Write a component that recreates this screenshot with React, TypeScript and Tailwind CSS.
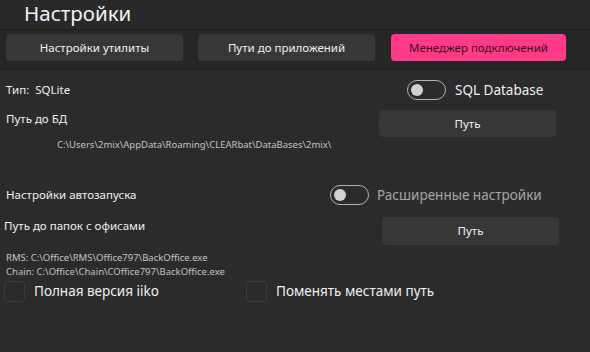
import React from "react";

const font = { fontFamily: '"Noto Sans", "Open Sans", sans-serif' };

function Toggle() {
  return (
    <div className="w-[39px] h-[20px] rounded-full border-[1.5px] border-[#b4b4b4] flex items-center pl-[3px] shrink-0">
      <div className="w-[12px] h-[12px] rounded-full bg-[#d2d2d2]" />
    </div>
  );
}

function Checkbox() {
  return <div className="w-[21px] h-[21px] rounded-[4px] border border-[#3c3c3c] bg-[#2a2a2a] shrink-0" />;
}

export default function App() {
  return (
    <div className="w-[590px] h-[352px] bg-[#2b2b2b] overflow-hidden text-white" style={font}>
      <div className="h-[30px] bg-[#292929] border-b border-[#1f1f1f] pl-[24px]">
        <div className="text-[20.5px] leading-[26px] text-[#f2f2f2]">Настройки</div>
      </div>
      <div className="h-[40px] bg-[#262626] border-b border-[#1f1f1f] flex items-start pt-[4px] pl-[6px]">
        <div className="w-[177px] h-[27px] rounded-[4px] bg-[#373737] flex items-center justify-center text-[11.5px] text-[#f0f0f0]">Настройки утилиты</div>
        <div className="w-[177px] h-[27px] ml-[15px] rounded-[4px] bg-[#373737] flex items-center justify-center text-[11.5px] text-[#f0f0f0]">Пути до приложений</div>
        <div className="w-[175px] h-[27px] ml-[16px] rounded-[4px] bg-[#ff3a86] flex items-center justify-center text-[11.5px] text-[#3a0d1e]">Менеджер подключений</div>
      </div>
      <div className="pt-[10px]">
        <div className="h-[20px] flex items-center">
          <div className="pl-[6px] text-[11.5px] text-[#f0f0f0] w-[407px]">Тип:&nbsp; SQLite</div>
          <Toggle />
          <div className="ml-[9px] text-[13.5px] text-[#f0f0f0]">SQL Database</div>
        </div>
        <div className="mt-[10px] h-[27px] flex items-start">
          <div className="pl-[6px] text-[11.5px] text-[#f0f0f0] w-[379px] leading-[18px]">Путь до БД</div>
          <div className="w-[177px] h-[27px] rounded-[4px] bg-[#373737] flex items-center justify-center text-[11.5px] text-[#f0f0f0]">Путь</div>
        </div>
        <div className="pl-[57px] mt-[2px] text-[9.5px] leading-[12px] text-[#c4c4c4]">C:\Users\2mix\AppData\Roaming\CLEARbat\DataBases\2mix\</div>
        <div className="mt-[34px] h-[20px] flex items-center">
          <div className="pl-[6px] text-[11.5px] text-[#f0f0f0] w-[330px]">Настройки автозапуска</div>
          <Toggle />
          <div className="ml-[8px] text-[13.5px] text-[#a6a6a6]">Расширенные настройки</div>
        </div>
        <div className="mt-[12px] h-[28px] flex items-start">
          <div className="pl-[4px] text-[11.5px] text-[#f0f0f0] w-[382px] leading-[18px]">Путь до папок с офисами</div>
          <div className="w-[177px] h-[28px] rounded-[4px] bg-[#373737] flex items-center justify-center text-[11.5px] text-[#f0f0f0]">Путь</div>
        </div>
        <div className="pl-[6px] mt-[6px] text-[9.5px] leading-[14px] text-[#c4c4c4]">
          <div>RMS: C:\Office\RMS\Office797\BackOffice.exe</div>
          <div>Chain: C:\Office\Chain\COffice797\BackOffice.exe</div>
        </div>
        <div className="mt-[2px] h-[21px] flex items-center">
          <div className="pl-[4px] flex items-center w-[246px]">
            <Checkbox />
            <div className="ml-[9px] text-[13.5px] text-[#f0f0f0]">Полная версия iiko</div>
          </div>
          <Checkbox />
          <div className="ml-[9px] text-[13.5px] text-[#f0f0f0]">Поменять местами путь</div>
        </div>
      </div>
    </div>
  );
}
